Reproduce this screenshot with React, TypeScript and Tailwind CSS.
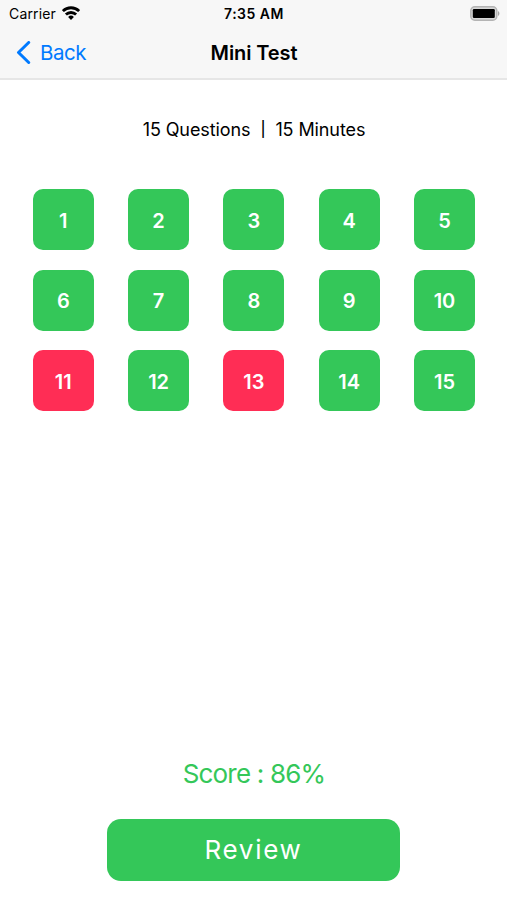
const WRONG = [11, 13]
const questions = Array.from({ length: 15 }, (_, i) => i + 1)

function StatusBar() {
  return (
    <div className="grid h-[27px] grid-cols-3 items-center pl-[9px] pr-[7px] text-[14px]">
      <div className="flex items-center gap-[6px]">
        <span className="tracking-[0.15px]">Carrier</span>
        <svg className="-mt-[2px]" width="18" height="14" viewBox="0 0 18 14" fill="none" stroke="black" strokeWidth="2.8">
          <path d="M0.9 5.1a11.5 11.5 0 0 1 16.2 0" />
          <path d="M3.9 8.6a7.2 7.2 0 0 1 10.2 0" />
          <path d="M9 13.9l-2.9-3a4.1 4.1 0 0 1 5.8 0z" fill="black" stroke="none" />
        </svg>
      </div>
      <span className="-ml-px text-center font-semibold tracking-[0.5px]">7:35 AM</span>
      <svg className="-mt-[1px] justify-self-end" width="30" height="15" viewBox="0 0 30 15">
        <rect x="0.8" y="0.8" width="26" height="13.4" rx="4" fill="#d8d8d8" stroke="#b4b4b4" strokeWidth="1.5" />
        <rect x="2.8" y="3" width="22" height="9" rx="1.2" fill="black" />
        <path d="M28 5c1.9 .9 1.9 4.1 0 5z" fill="#a6a6a6" />
      </svg>
    </div>
  )
}

export default function App() {
  return (
    <div className="flex h-[900px] w-[507px] flex-col bg-white font-['Inter','Liberation_Sans',sans-serif] text-black">
      <header className="h-20 border-b-2 border-[#e6e6e6] bg-[#f7f7f7]">
        <StatusBar />
        <nav className="grid h-[51px] grid-cols-3 items-center px-4">
          <button className="flex items-center gap-[9px] text-[20.5px] tracking-[-0.5px] text-[#007aff]">
            <svg
              width="15"
              height="24"
              viewBox="0 0 15 24"
              fill="none"
              stroke="currentColor"
              strokeWidth="3"
              strokeLinecap="round"
              strokeLinejoin="round"
            >
              <path d="M12.7 1.5L2.5 11.5l10.2 10" />
            </svg>
            <span className="pt-px">Back</span>
          </button>
          <h1 className="whitespace-nowrap pl-px text-center text-[20px] font-semibold tracking-[-0.1px]">Mini Test</h1>
        </nav>
      </header>

      <main className="flex flex-1 flex-col items-center">
        <p className="mt-[37px] flex h-6 items-center gap-[10px] pl-px text-[18px] tracking-[-0.1px]">
          <span>15 Questions</span>
          <span className="w-[5px] text-center text-[15px] font-medium">|</span>
          <span>15 Minutes</span>
        </p>

        <div className="mt-12 grid grid-cols-5 gap-x-[34.3px] gap-y-[19.6px] pl-[0.8px]">
          {questions.map((n) => (
            <button
              key={n}
              className={`h-[61px] w-[61px] rounded-[10px] pt-[2px] text-[20px] font-semibold text-white ${
                WRONG.includes(n) ? 'bg-[#ff2d55]' : 'bg-[#34c759]'
              }`}
            >
              {n}
            </button>
          ))}
        </div>

        <p className="mt-auto pl-px text-[26px] leading-8 tracking-[-0.8px] text-[#34c759]">Score : 86%</p>
        <button className="mb-[19px] mt-[29px] h-[62px] w-[293px] rounded-[14px] bg-[#34c759] pb-px text-[26px] tracking-[1.7px] text-white">
          Review
        </button>
      </main>
    </div>
  )
}
